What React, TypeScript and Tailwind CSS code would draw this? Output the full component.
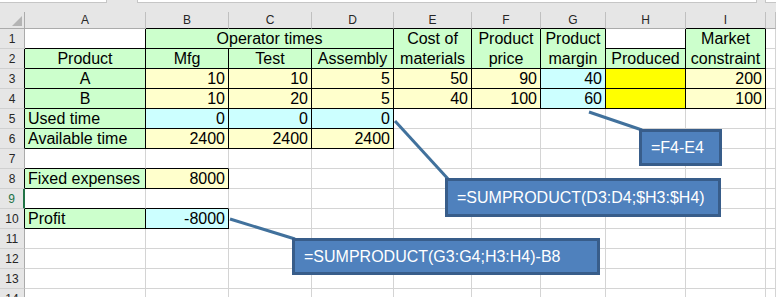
import React from "react";

type Fill = "g" | "y" | "c" | "Y" | "w";
type Cell = {
  r: number;
  c: number;
  rs?: number;
  cs?: number;
  text?: string;
  fill: Fill;
  align?: "l" | "c" | "r";
  border?: boolean;
};

const cols = ["A", "B", "C", "D", "E", "F", "G", "H", "I", ""];

const cells: Cell[] = [
  { r: 1, c: 1, fill: "w", border: false },
  { r: 1, c: 2, cs: 3, text: "Operator times", fill: "g", align: "c" },
  { r: 1, c: 5, rs: 2, text: "Cost of\nmaterials", fill: "g", align: "c" },
  { r: 1, c: 6, rs: 2, text: "Product\nprice", fill: "g", align: "c" },
  { r: 1, c: 7, rs: 2, text: "Product\nmargin", fill: "g", align: "c" },
  { r: 1, c: 8, fill: "w", border: false },
  { r: 1, c: 9, rs: 2, text: "Market\nconstraint", fill: "g", align: "c" },
  { r: 2, c: 1, text: "Product", fill: "g", align: "c" },
  { r: 2, c: 2, text: "Mfg", fill: "g", align: "c" },
  { r: 2, c: 3, text: "Test", fill: "g", align: "c" },
  { r: 2, c: 4, text: "Assembly", fill: "g", align: "c" },
  { r: 2, c: 8, text: "Produced", fill: "g", align: "c" },
  { r: 3, c: 1, text: "A", fill: "g", align: "c" },
  { r: 3, c: 2, text: "10", fill: "y" },
  { r: 3, c: 3, text: "10", fill: "y" },
  { r: 3, c: 4, text: "5", fill: "y" },
  { r: 3, c: 5, text: "50", fill: "y" },
  { r: 3, c: 6, text: "90", fill: "y" },
  { r: 3, c: 7, text: "40", fill: "c" },
  { r: 3, c: 8, fill: "Y" },
  { r: 3, c: 9, text: "200", fill: "y" },
  { r: 4, c: 1, text: "B", fill: "g", align: "c" },
  { r: 4, c: 2, text: "10", fill: "y" },
  { r: 4, c: 3, text: "20", fill: "y" },
  { r: 4, c: 4, text: "5", fill: "y" },
  { r: 4, c: 5, text: "40", fill: "y" },
  { r: 4, c: 6, text: "100", fill: "y" },
  { r: 4, c: 7, text: "60", fill: "c" },
  { r: 4, c: 8, fill: "Y" },
  { r: 4, c: 9, text: "100", fill: "y" },
  { r: 5, c: 1, text: "Used time", fill: "g", align: "l" },
  { r: 5, c: 2, text: "0", fill: "c" },
  { r: 5, c: 3, text: "0", fill: "c" },
  { r: 5, c: 4, text: "0", fill: "c" },
  { r: 6, c: 1, text: "Available time", fill: "g", align: "l" },
  { r: 6, c: 2, text: "2400", fill: "y" },
  { r: 6, c: 3, text: "2400", fill: "y" },
  { r: 6, c: 4, text: "2400", fill: "y" },
  { r: 8, c: 1, text: "Fixed expenses", fill: "g", align: "l" },
  { r: 8, c: 2, text: "8000", fill: "y" },
  { r: 10, c: 1, text: "Profit", fill: "g", align: "l" },
  { r: 10, c: 2, text: "-8000", fill: "c" },
];

const fillCls: Record<Fill, string> = {
  g: "bg-[#ccffcc]",
  y: "bg-[#ffffcc]",
  c: "bg-[#ccffff]",
  Y: "bg-[#ffff00]",
  w: "bg-white",
};

const alignCls = {
  l: "justify-start text-left",
  c: "justify-center text-center",
  r: "justify-end text-right",
};

function cellAt(r: number, c: number) {
  return cells.find(
    (x) => r >= x.r && r < x.r + (x.rs || 1) && c >= x.c && c < x.c + (x.cs || 1)
  );
}

function isBordered(r: number, c: number) {
  const x = cellAt(r, c);
  return !!x && x.border !== false;
}

function SheetCell({ cell }: { cell: Cell }) {
  const rs = cell.rs || 1;
  const cs = cell.cs || 1;
  const own = cell.border !== false;
  let right = own;
  for (let r = cell.r; r < cell.r + rs; r++) if (isBordered(r, cell.c + cs)) right = true;
  let bottom = own;
  for (let c = cell.c; c < cell.c + cs; c++) if (isBordered(cell.r + rs, c)) bottom = true;

  return (
    <div
      className={`flex items-center px-[3px] overflow-visible whitespace-pre-line leading-[20px] text-[16px] text-black border-r border-b ${
        right ? "border-r-black" : "border-r-[#d4d4d4]"
      } ${bottom ? "border-b-black" : "border-b-[#d4d4d4]"} ${fillCls[cell.fill]} ${
        alignCls[cell.align || "r"]
      } ${cs === 3 ? "col-span-3" : ""} ${rs === 2 ? "row-span-2" : ""}`}
    >
      {cell.text}
    </div>
  );
}

function RowHeader({ n }: { n: number }) {
  const active = n === 9;
  const right = isBordered(n, 1);
  return (
    <div
      className={`flex items-center justify-center text-[12px] bg-[#e6e6e6] border-b border-b-[#d0d0d0] ${
        active
          ? "text-[#217346] border-r-2 border-r-[#217346] bg-[#d9d9d9]"
          : right
          ? "text-[#262626] border-r border-r-black"
          : "text-[#262626] border-r border-r-[#ababab]"
      }`}
    >
      {n}
    </div>
  );
}

function Callout({ text, className }: { text: string; className: string }) {
  return (
    <div
      className={`absolute flex items-center pl-[9px] bg-[#4f81bd] border-[3px] border-[#385d8a] text-white text-[16px] whitespace-nowrap ${className}`}
    >
      {text}
    </div>
  );
}

export default function App() {
  const rows = Array.from({ length: 14 }, (_, i) => i + 1);

  return (
    <div className="relative w-[776px] h-[297px] overflow-hidden bg-white font-['Liberation_Sans',Arial,sans-serif]">
      {/* formula bar remains */}
      <div className="h-[12px] bg-[#e6e6e6] flex items-start gap-0">
        <div className="w-[107px] h-[3px] bg-white border-b border-r border-[#c6c6c6]" />
        <div className="w-[30px]" />
        <div className="w-[620px] h-[3px] bg-white border-b border-x border-[#c6c6c6]" />
        <div className="w-[8px]" />
        <div className="flex-1 h-[3px] bg-white border-b border-l border-[#c6c6c6]" />
      </div>

      <div className="grid grid-cols-[25px_121px_83px_83px_82px_78px_69px_65px_80px_80px_1fr] grid-rows-[17px_repeat(14,20px)]">
        {/* corner */}
        <div className="relative bg-[#e6e6e6] border-r border-b border-r-[#ababab] border-b-[#ababab]">
          <svg className="absolute right-[2px] bottom-[2px]" width="10" height="10" viewBox="0 0 10 10">
            <polygon points="10,0 10,10 0,10" fill="#b4b4b4" />
          </svg>
        </div>
        {cols.map((l, i) => (
          <div
            key={i}
            className={`flex items-center justify-center text-[12px] text-[#262626] bg-[#e6e6e6] border-r border-r-[#c0c0c0] border-b ${
              isBordered(1, i + 1) ? "border-b-black" : "border-b-[#ababab]"
            }`}
          >
            {l}
          </div>
        ))}

        {rows.map((r) => (
          <React.Fragment key={r}>
            <RowHeader n={r} />
            {cols.map((_, i) => {
              const c = i + 1;
              const x = cellAt(r, c);
              if (x && (x.r !== r || x.c !== c)) return null;
              const cell: Cell = x || { r, c, fill: "w", border: false };
              return <SheetCell key={c} cell={cell} />;
            })}
          </React.Fragment>
        ))}
      </div>

      {/* callouts */}
      <svg className="absolute left-0 top-0 pointer-events-none" width="776" height="297">
        <g stroke="#41719c" strokeWidth="3" strokeLinecap="butt">
          <line x1="589" y1="112" x2="642" y2="130" />
          <line x1="395" y1="121" x2="449" y2="180" />
          <line x1="230" y1="219" x2="295" y2="239" />
        </g>
      </svg>
      <Callout text="=F4-E4" className="left-[639px] top-[129px] w-[83px] h-[37px]" />
      <Callout text="=SUMPRODUCT(D3:D4;$H3:$H4)" className="left-[445px] top-[178px] w-[276px] h-[39px]" />
      <Callout text="=SUMPRODUCT(G3:G4;H3:H4)-B8" className="left-[292px] top-[238px] w-[308px] h-[37px]" />
    </div>
  );
}
